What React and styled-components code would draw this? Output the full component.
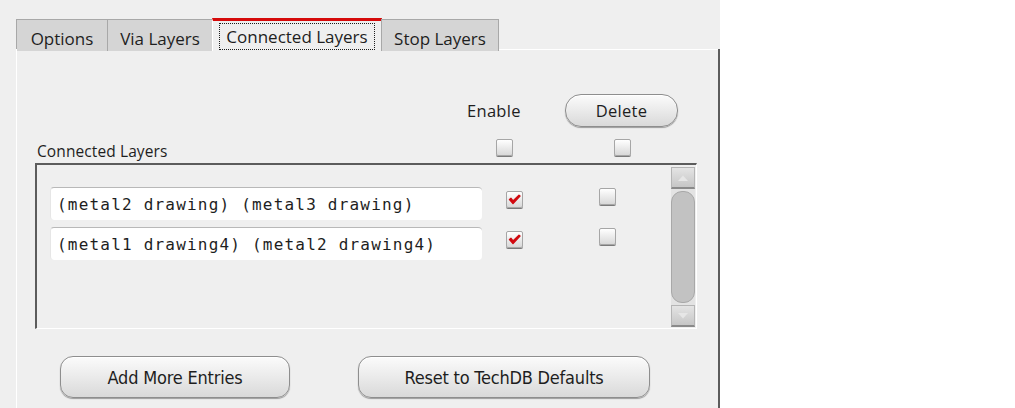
import React from "react";
import styled, { createGlobalStyle } from "styled-components";

const GlobalStyle = createGlobalStyle`
  html, body {
    margin: 0;
    padding: 0;
    background: #ffffff;
  }
  body {
    font-family: "Open Sans", "Noto Sans", sans-serif;
  }
`;

let panelBg = "#efefef";
let darkEdge = "#5c5c5c";

const entries = [
  { text: "(metal2 drawing) (metal3 drawing)", enabled: true, del: false },
  { text: "(metal1 drawing4) (metal2 drawing4)", enabled: true, del: false },
];

const tabs = [
  { label: "Options", w: 92 },
  { label: "Via Layers", w: 106 },
  { label: "Connected Layers", w: 170, active: true },
  { label: "Stop Layers", w: 118 },
];

export default function App() {
  return (
    <>
      <GlobalStyle />
      <Page>
        <Dialog>
          <TabBar>
            {tabs.map((t) => (
              <Tab key={t.label} $w={t.w} $active={t.active}>
                {t.active ? <Focus>{t.label}</Focus> : t.label}
              </Tab>
            ))}
            <TabRest />
          </TabBar>
          <Panel>
            <HeaderRow>
              <EnableLabel>Enable</EnableLabel>
              <Button $w={113} $h={33} $r={16}>
                Delete
              </Button>
            </HeaderRow>
            <TitleRow>
              <GroupTitle>Connected Layers</GroupTitle>
              <Check $ml={0} />
              <Check $ml={101} />
            </TitleRow>
            <GroupBox>
              <List>
                {entries.map((e, i) => (
                  <EntryRow key={i}>
                    <Field>{e.text}</Field>
                    <Check $ml={24} $top={4}>
                      {e.enabled && <Tick />}
                    </Check>
                    <Check $ml={76} $top={1}>
                      {e.del && <Tick />}
                    </Check>
                  </EntryRow>
                ))}
              </List>
              <ScrollBar>
                <ArrowButton>
                  <Arrow viewBox="0 0 12 8">
                    <path d="M1 7 L6 1.5 L11 7 Z" fill="#e6e6e6" />
                  </Arrow>
                </ArrowButton>
                <Track>
                  <Thumb />
                </Track>
                <ArrowButton>
                  <Arrow viewBox="0 0 12 8">
                    <path d="M1 1 L6 6.5 L11 1 Z" fill="#e6e6e6" />
                  </Arrow>
                </ArrowButton>
              </ScrollBar>
            </GroupBox>
            <ButtonRow>
              <Button $w={230} $h={42} $r={13} $big>
                Add More Entries
              </Button>
              <Button $w={292} $h={42} $r={13} $big>
                Reset to TechDB Defaults
              </Button>
            </ButtonRow>
          </Panel>
        </Dialog>
      </Page>
    </>
  );
}

function Tick() {
  return (
    <TickSvg viewBox="0 0 17 17">
      <path
        d="M3.5 8.5 L7 12.5 L14 5 L13 4.2 L7 10 L5 7.3 Z"
        fill="#d10a10"
        stroke="#d10a10"
        strokeWidth="1.4"
        strokeLinejoin="round"
      />
    </TickSvg>
  );
}

const Page = styled.div`
  display: flex;
  width: 1015px;
  height: 408px;
  overflow: hidden;
  background: #ffffff;
`;

const Dialog = styled.div`
  width: 720px;
  height: 408px;
  box-sizing: border-box;
  padding: 18px 0 0 16px;
  background: ${panelBg};
  display: flex;
  flex-direction: column;
`;

const TabBar = styled.div`
  display: flex;
  height: 33px;
  align-items: flex-end;
`;

const Tab = styled.div`
  width: ${(p) => p.$w}px;
  height: ${(p) => (p.$active ? "33px" : "32px")};
  box-sizing: border-box;
  padding-top: ${(p) => (p.$active ? "1px" : "5px")};
  display: flex;
  align-items: center;
  justify-content: center;
  font-size: 17px;
  color: #1e1e1e;
  background: ${(p) => (p.$active ? panelBg : "#d5d5d5")};
  border: 1px solid #a8a8a8;
  border-bottom: none;
  border-left: ${(p) => (p.$active ? "1px solid #ffffff" : "1px solid #a8a8a8")};
  border-top: ${(p) => (p.$active ? "3px solid #d50a0a" : "1px solid #a8a8a8")};
  margin-left: -1px;
  &:first-child {
    margin-left: 0;
  }
`;

const Focus = styled.span`
  display: inline-block;
  width: 156px;
  box-sizing: border-box;
  text-align: center;
  padding: 1px 0 1px;
  border: 1px dotted #1e1e1e;
  line-height: 23px;
`;

const TabRest = styled.div`
  flex: 1;
  height: 2px;
  border-bottom: 1px solid #ffffff;
  margin-bottom: 1px;
  align-self: flex-end;
`;

const Panel = styled.div`
  flex: 1;
  box-sizing: border-box;
  margin-top: -2px;
  border-left: 1px solid #ffffff;
  border-right: 2px solid ${darkEdge};
  display: flex;
  flex-direction: column;
  padding-left: 18px;
`;

const HeaderRow = styled.div`
  display: flex;
  align-items: center;
  margin-top: 45px;
  height: 33px;
`;

const EnableLabel = styled.div`
  margin-left: 432px;
  width: 55px;
  font-size: 16.5px;
  color: #1e1e1e;
  letter-spacing: 0.3px;
`;

const Button = styled.div`
  width: ${(p) => p.$w}px;
  height: ${(p) => p.$h}px;
  box-sizing: border-box;
  border-radius: ${(p) => p.$r}px;
  border: 1px solid #8e8e8e;
  background: linear-gradient(#fbfbfb 0%, #ececec 45%, #d9d9d9 100%);
  box-shadow: 0 1px 1px rgba(0, 0, 0, 0.35), inset 0 1px 0 #ffffff;
  display: flex;
  align-items: center;
  justify-content: center;
  color: #1e1e1e;
  font-family: ${(p) =>
    p.$big ? '"DejaVu Sans Condensed", "DejaVu Sans", sans-serif' : '"Open Sans", sans-serif'};
  font-size: ${(p) => (p.$big ? "18px" : "16.5px")};
  letter-spacing: ${(p) => (p.$big ? "-0.2px" : "0.3px")};
  margin-left: 43px;
`;

const TitleRow = styled.div`
  display: flex;
  align-items: flex-end;
  margin-top: 12px;
  height: 17px;
`;

const GroupTitle = styled.div`
  width: 459px;
  padding-left: 2px;
  font-size: 15.5px;
  color: #1e1e1e;
  line-height: 18px;
  margin-bottom: -4px;
  letter-spacing: 0.1px;
`;

const Check = styled.div`
  position: relative;
  width: 17px;
  height: 17px;
  box-sizing: border-box;
  margin-left: ${(p) => p.$ml}px;
  margin-top: ${(p) => p.$top || 0}px;
  align-self: flex-start;
  border: 1px solid #a6a6a6;
  border-radius: 2px;
  background: linear-gradient(#ffffff, #d8d8d8);
  box-shadow: 0 1px 0 #7a7a7a;
`;

const TickSvg = styled.svg`
  position: absolute;
  left: -1px;
  top: -1px;
  width: 17px;
  height: 17px;
`;

const GroupBox = styled.div`
  margin-top: 7px;
  width: 662px;
  height: 166px;
  box-sizing: border-box;
  border-top: 2px solid ${darkEdge};
  border-left: 2px solid ${darkEdge};
  border-right: 1px solid #ffffff;
  border-bottom: 1px solid #ffffff;
  display: flex;
`;

const List = styled.div`
  flex: 1;
  display: flex;
  flex-direction: column;
  gap: 7px;
  padding: 22px 0 0 13px;
`;

const EntryRow = styled.div`
  display: flex;
  align-items: flex-start;
`;

const Field = styled.div`
  width: 432px;
  height: 33px;
  box-sizing: border-box;
  background: #ffffff;
  border-top: 1px solid #b8b8b8;
  border-left: 1px solid #e6e6e6;
  border-radius: 4px;
  padding-left: 6px;
  display: flex;
  align-items: center;
  font-family: "DejaVu Sans Mono", monospace;
  font-size: 16px;
  letter-spacing: 1.2px;
  color: #1e1e1e;
`;

const ScrollBar = styled.div`
  width: 24px;
  margin: 2px 1px 0 0;
  height: 160px;
  display: flex;
  flex-direction: column;
`;

const ArrowButton = styled.div`
  height: 22px;
  box-sizing: border-box;
  border: 1px solid #b5b5b5;
  border-bottom: 2px solid #8a8a8a;
  background: linear-gradient(#e4e4e4, #c6c6c6);
  display: flex;
  align-items: center;
  justify-content: center;
`;

const Arrow = styled.svg`
  width: 12px;
  height: 8px;
`;

const Track = styled.div`
  flex: 1;
  padding: 2px 0;
  background: #e3e3e3;
  display: flex;
`;

const Thumb = styled.div`
  flex: 1;
  border: 1px solid #a8a8a8;
  border-radius: 11px;
  background: #c2c2c2;
`;

const ButtonRow = styled.div`
  display: flex;
  margin-top: 27px;
  padding-left: 25px;
  & > div:first-child {
    margin-left: 0;
  }
  & > div:last-child {
    margin-left: 68px;
  }
`;
